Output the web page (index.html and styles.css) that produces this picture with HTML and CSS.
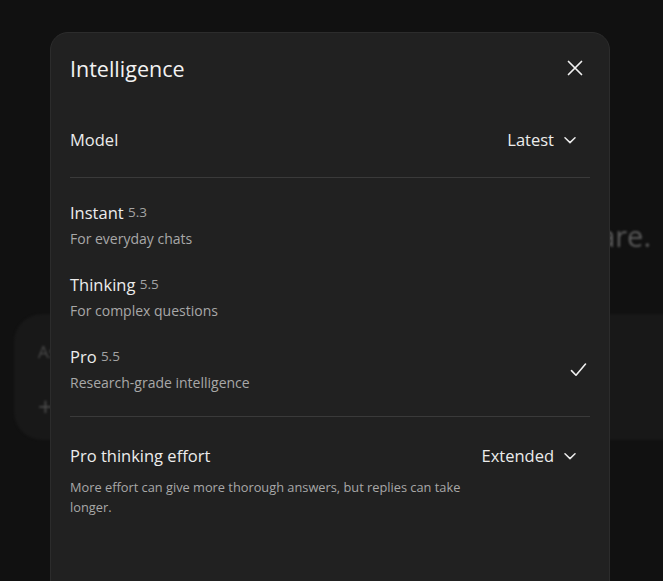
FILE: index.html
```html
<!DOCTYPE html>
<html lang="en">
<head>
    <meta charset="UTF-8">
    <meta name="viewport" content="width=device-width, initial-scale=1.0">
    <title>Intelligence</title>
    <link rel="stylesheet" href="styles.css">
</head>
<body>
    <!-- page behind the dialog -->
    <div class="page">
        <h1 class="hero">Ready when you are.</h1>
        <div class="composer">
            <div class="composer-text">Ask anything</div>
            <div class="composer-plus">+</div>
        </div>
    </div>

    <div class="modal">
        <div class="modal-head">
            <h2>Intelligence</h2>
            <button class="close" aria-label="Close">
                <svg width="16" height="16" viewBox="0 0 16 16"><path d="M1.5 1.5 14.5 14.5M14.5 1.5 1.5 14.5" stroke="currentColor" stroke-width="1.7" stroke-linecap="round"/></svg>
            </button>
        </div>

        <div class="row">
            <span class="row-label">Model</span>
            <button class="select">Latest
                <svg width="12" height="12" viewBox="0 0 12 12"><path d="M1 3.8 6 8.6 11 3.8" fill="none" stroke="currentColor" stroke-width="1.5" stroke-linecap="round" stroke-linejoin="round"/></svg>
            </button>
        </div>

        <div class="divider"></div>

        <ul class="models">
            <li class="model">
                <div>
                    <div class="model-name">Instant <span class="ver">5.3</span></div>
                    <div class="model-desc">For everyday chats</div>
                </div>
            </li>
            <li class="model">
                <div>
                    <div class="model-name">Thinking <span class="ver">5.5</span></div>
                    <div class="model-desc">For complex questions</div>
                </div>
            </li>
            <li class="model">
                <div>
                    <div class="model-name">Pro <span class="ver">5.5</span></div>
                    <div class="model-desc">Research-grade intelligence</div>
                </div>
                <svg class="check" width="17" height="16" viewBox="0 0 17 16"><path d="M1.5 8.6 6 13.2 15.5 2" fill="none" stroke="currentColor" stroke-width="1.6" stroke-linecap="round" stroke-linejoin="round"/></svg>
            </li>
        </ul>

        <div class="divider"></div>

        <div class="effort">
            <span class="row-label">Pro thinking effort</span>
            <button class="select">Extended
                <svg width="12" height="12" viewBox="0 0 12 12"><path d="M1 3.8 6 8.6 11 3.8" fill="none" stroke="currentColor" stroke-width="1.5" stroke-linecap="round" stroke-linejoin="round"/></svg>
            </button>
        </div>
        <p class="note">More effort can give more thorough answers, but replies can take longer.</p>
    </div>
</body>
</html>
```

FILE: styles.css
```css
body {
    margin: 0;
    background: #111111;
    font-family: "Open Sans", "Noto Sans", Arial, sans-serif;
    color: #ececec;
    overflow: hidden;
    height: 581px;
    position: relative;
}

/* background page */
.page {
    padding-top: 216px;
    filter: blur(1px);
}

.hero {
    margin: 0;
    text-align: right;
    padding-right: 12px;
    font-size: 29px;
    font-weight: 400;
    color: #5a5a5a;
    line-height: 40px;
}

.composer {
    margin: 58px 0 0 14px;
    width: 720px;
    height: 126px;
    border-radius: 28px;
    background: #181818;
    box-sizing: border-box;
    padding: 26px 0 0 24px;
    color: #4a4a4a;
    font-size: 17px;
}

.composer-plus {
    font-size: 26px;
    margin-top: 25px;
}

/* dialog */
.modal {
    position: absolute;
    left: 50px;
    top: 32px;
    width: 560px;
    height: 600px;
    box-sizing: border-box;
    background: #212121;
    border: 1px solid #2c2c2c;
    border-radius: 18px;
    padding: 0 19px;
}

.modal-head {
    display: flex;
    align-items: center;
    justify-content: space-between;
    height: 70px;
}

.modal-head h2 {
    margin: 0;
    font-size: 21.5px;
    font-weight: 400;
    color: #f2f2f2;
}

button {
    background: none;
    border: 0;
    padding: 0;
    font: inherit;
    color: inherit;
    cursor: pointer;
}

.close {
    display: flex;
    margin-right: 7px;
    color: #f0f0f0;
}

.row {
    display: flex;
    align-items: center;
    justify-content: space-between;
    height: 74px;
}

.row-label {
    font-size: 16.5px;
    line-height: 22px;
}

.select {
    display: flex;
    align-items: center;
    gap: 10px;
    font-size: 16.5px;
    line-height: 22px;
    padding-right: 14px;
}

.divider {
    height: 1px;
    background: #3a3a3a;
}

.models {
    list-style: none;
    margin: 0;
    padding: 10px 0 12px;
}

.model {
    display: flex;
    align-items: center;
    justify-content: space-between;
    height: 72px;
}

.model-name {
    font-size: 16.5px;
    line-height: 24px;
}

.ver {
    font-size: 13.5px;
    color: #a3a3a3;
    vertical-align: 2px;
}

.model-desc {
    font-size: 14px;
    color: #a8a8a8;
    margin-top: 4px;
    line-height: 20px;
}

.check {
    color: #f0f0f0;
    margin-right: 3px;
    margin-top: 4px;
}

.effort {
    display: flex;
    align-items: center;
    justify-content: space-between;
    padding-top: 28px;
}

.note {
    margin: 10px 0 0;
    max-width: 400px;
    font-size: 12.8px;
    line-height: 20px;
    color: #a8a8a8;
}
```
